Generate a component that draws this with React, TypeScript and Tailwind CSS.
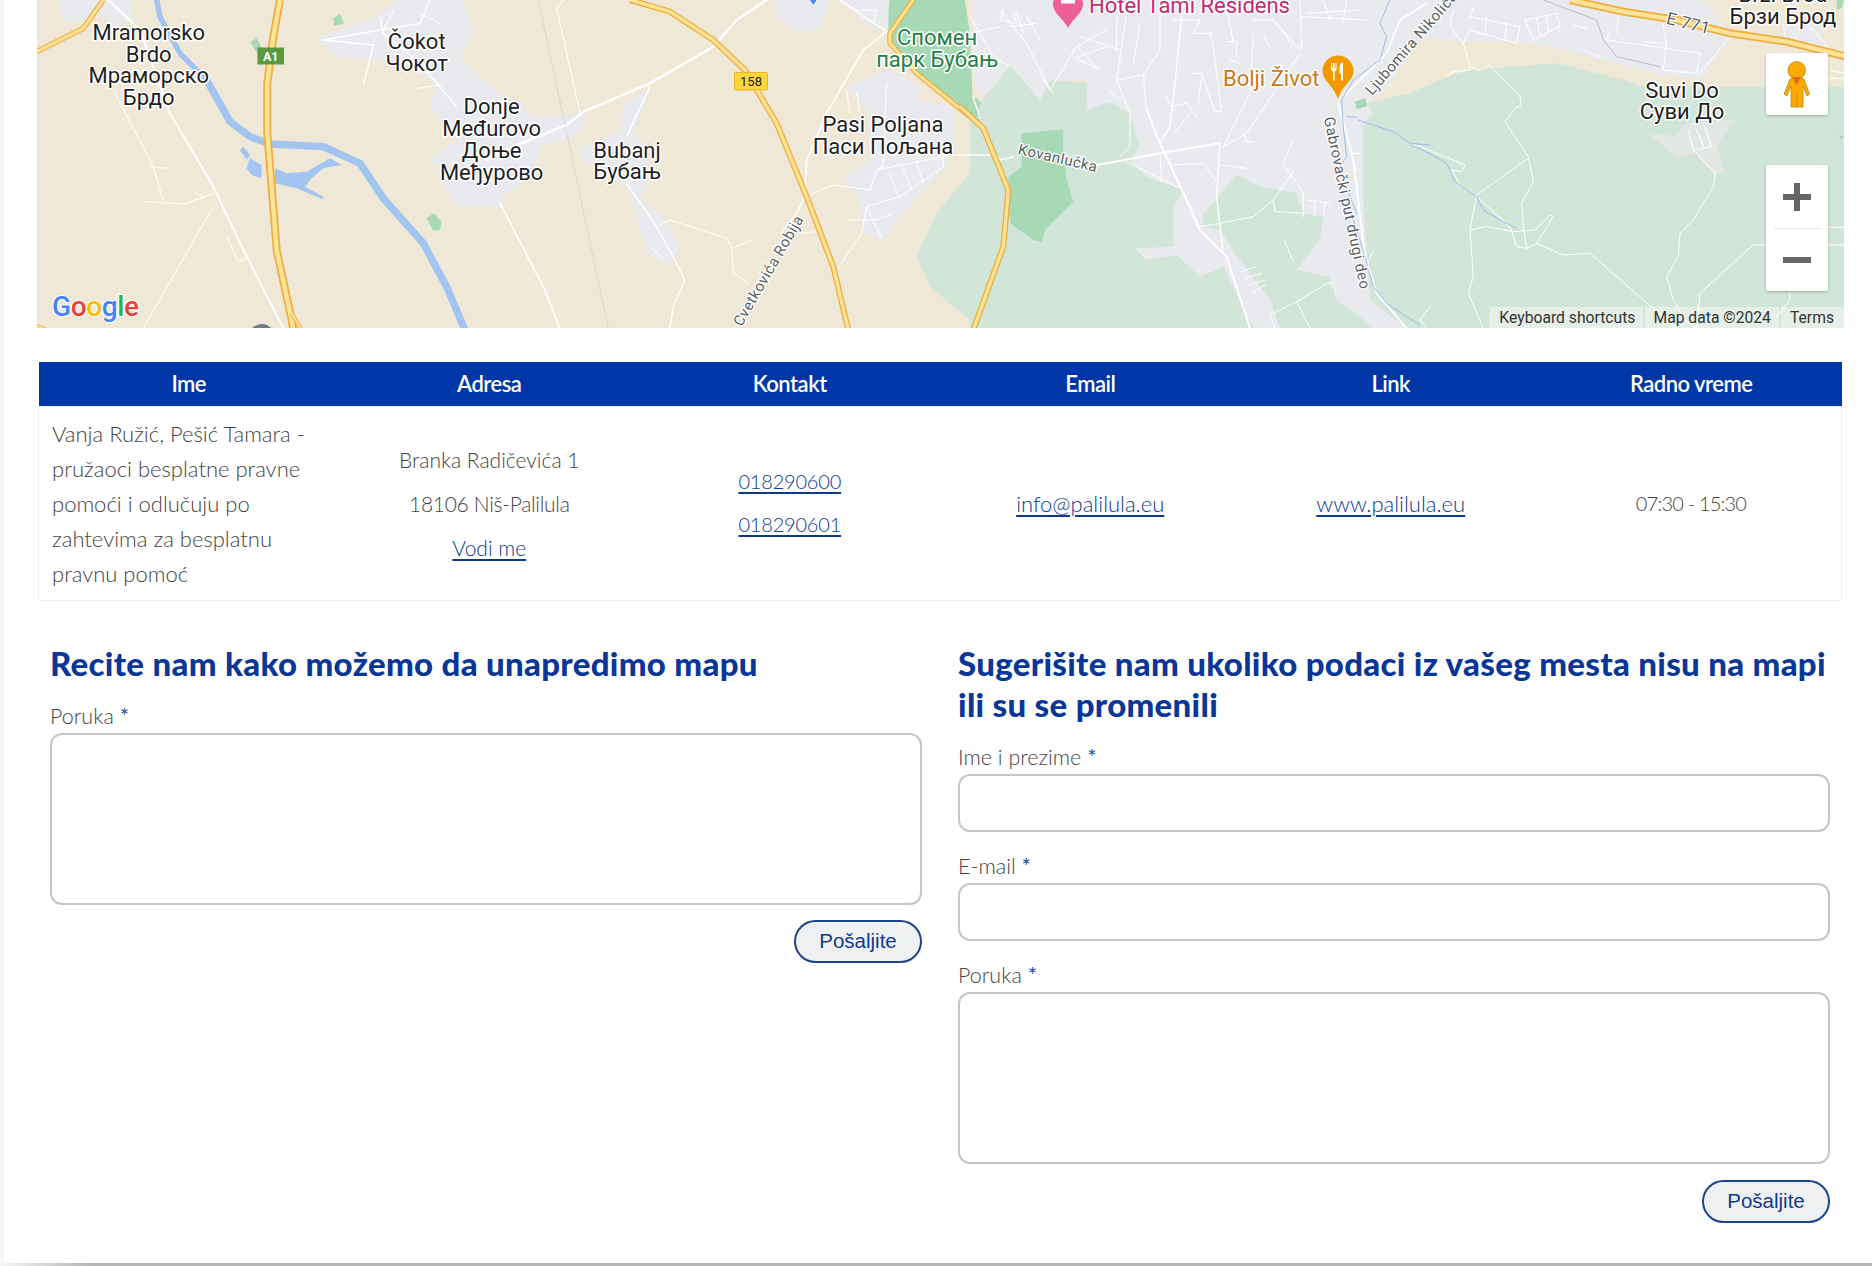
import React from 'react';

// map sketch coordinates are 3x page pixels, grouped per horizontal slice
const A = 'translate(30 0) scale(0.3333)';
const B = 'translate(500 0) scale(0.3333)';
const C = 'translate(960 0) scale(0.3333)';
const D = 'translate(1410 0) scale(0.3333)';

type Road = [number, string];

const Roads = ({ t, color = '#ffffff', data }: { t: string; color?: string; data: Road[] }) => (
  <g transform={t} fill="none" stroke={color} strokeLinejoin="round" strokeLinecap="round">
    {data.map(([w, pts]) => (
      <polyline key={pts} points={pts} strokeWidth={w} />
    ))}
  </g>
);

const Areas = ({ t, color, data }: { t: string; color: string; data: string[] }) => (
  <g transform={t} fill={color}>
    {data.map((pts) => (
      <polygon key={pts} points={pts} />
    ))}
  </g>
);

const Highway = ({ t, w, pts }: { t: string; w: number; pts: string }) => (
  <g transform={t} fill="none" strokeLinejoin="round">
    <polyline points={pts} stroke="#eeae42" strokeWidth={w} />
    <polyline points={pts} stroke="#fde396" strokeWidth={w * 0.55} />
  </g>
);

const Place = ({ x, y, lines, color = '#1f1f1f', size = 22, anchor = 'middle' }: { x: number; y: number[]; lines: string[]; color?: string; size?: number; anchor?: 'middle' | 'start' }) => (
  <text fontFamily="Roboto, sans-serif" fontSize={size} fill={color} textAnchor={anchor} stroke="#ffffff" strokeWidth={3} strokeLinejoin="round" paintOrder="stroke">
    {lines.map((line, i) => (
      <tspan key={line} x={x} y={y[i]}>
        {line}
      </tspan>
    ))}
  </text>
);

const RoadName = ({ x, y, angle, children, anchor = 'middle', size = 15 }: { x: number; y: number; angle: number; children: string; anchor?: 'middle' | 'start' | 'end'; size?: number }) => (
  <text transform={`translate(${x} ${y}) rotate(${angle})`} fontFamily="Roboto, sans-serif" fontSize={size} letterSpacing={0.4} fill="#5b5f64" textAnchor={anchor} stroke="#ffffff" strokeWidth={2.5} strokeLinejoin="round" paintOrder="stroke">
    {children}
  </text>
);

const MapDrawing = () => (
  <svg viewBox="37 0 1807 328" className="absolute inset-0 h-full w-full">
    <rect x="37" y="0" width="1807" height="328" fill="#f0e8d6" />

    {/* forest */}
    <Areas
      t={C}
      color="#d2e5d9"
      data={['-130,770 -70,640 30,520 30,340 100,260 150,195 240,300 270,240 1220,310 1350,280 1460,230 1530,210 1790,190 1990,240 2070,265 2310,260 2652,260 2652,985 30,985 30,960 -90,860']}
    />
    <Areas t={B} color="#a7d9b6" data={['1160,60 1170,0 1395,0 1410,100 1418,300 1440,350 1410,350 1250,220 1170,130']} />

    {/* built up areas */}
    <Areas
      t={C}
      color="#e8eaed"
      data={[
        '40,0 40,220 60,290 100,260 150,195 240,300 270,240 380,240 380,330 450,305 510,340 540,440 510,480 560,530 670,570 640,620 640,740 525,745 560,780 650,765 720,830 790,800 880,985 1340,985 1230,900 1210,600 1210,370 1240,340 1220,310 1240,300 1300,240 1370,130 1410,115 1500,125 1690,125 1810,150 2110,225 2220,235 2320,110 2230,0',
      ]}
    />
    <Areas
      t={C}
      color="#d2e5d9"
      data={['730,640 830,525 900,560 1010,580 1030,640 1090,650 1080,720 1010,810 1110,830 1130,900 1230,975 1240,985 960,985 930,900 840,780 780,690 730,680']}
    />
    <Areas
      t={B}
      color="#e8eaed"
      data={[
        '820,0 830,50 900,95 960,90 990,0',
        '1020,0 1165,0 1165,90 1120,90',
        '1040,260 1160,210 1270,260 1250,300 1360,320 1360,420 1340,500 1300,540 1210,640 1150,720 1090,700 1080,600 1030,530 1110,480 1100,330',
        '370,310 450,265 400,400 440,440 450,540 420,600 490,650 540,740 510,800 440,760 420,680 380,560 330,530 240,470 240,440 360,400',
        '0,300 60,310 100,350 260,340 250,385 215,410 120,440 110,490 40,570 0,590',
      ]}
    />
    <Areas
      t={A}
      color="#e8eaed"
      data={[
        '85,0 100,60 150,70 200,35 250,80 310,60 300,0',
        '860,115 1040,50 1100,0 1300,0 1330,100 1290,170 1360,240 1420,290 1420,620 1290,620 1240,560 1230,500 1190,480 1280,420 1200,320 1220,260 1130,180 1020,180 920,170',
      ]}
    />
    <Areas t={D} color="#e8eaed" data={['1120,60 1220,70 1250,140 1120,110']} />
    <Areas t={D} color="#e2e6e4" data={['720,405 760,400 790,410 830,370 970,360 920,440 945,515 915,525 860,460 800,470']} />

    {/* parks */}
    <Areas
      t={C}
      color="#a7d9b6"
      data={['185,400 310,388 310,450 320,540 340,605 255,690 245,725 220,720 150,670 145,530 185,500', '45,290 65,310 55,325 40,300', '1185,305 1215,295 1222,318 1190,328']}
    />
    <Areas t={A} color="#a7d9b6" data={['910,55 930,42 942,70 912,78', '660,125 680,115 700,150 680,158', '1190,655 1212,640 1235,665 1230,690 1210,692']} />
    <Areas t={D} color="#a7d9b6" data={['1280,0 1302,0 1295,25 1280,30', '1285,405 1302,410 1295,420']} />

    {/* water */}
    <Roads t={A} color="#a1c4f1" data={[[16, '380,0 390,50 450,160 530,240'], [22, '530,240 600,365 660,410 720,432 880,440 990,490 1060,595 1180,730 1250,860 1305,990']]} />
    <Areas
      t={A}
      color="#a1c4f1"
      data={['630,450 640,440 660,465 650,480', '660,475 695,495 695,535 665,525 650,505', '735,505 770,520 830,515 900,475 935,495 880,505 845,535 825,560 880,590 878,598 800,565 735,550']}
    />
    <Areas t={B} color="#4285f4" data={['930,0 950,0 940,14']} />

    {/* rail and thin lines */}
    <Roads t={B} color="#d6d6d6" data={[[3, '115,0 325,985']]} />
    <Roads t={D} color="#b9bcc0" data={[[3, '400,0 560,60 580,120 620,170 750,200']]} />

    {/* streets */}
    <Roads
      t={A}
      data={[
        [6, '235,0 330,90 420,340 550,560 640,750 760,985'],
        [3, '250,270 370,500 400,605'],
        [3, '360,500 412,505'],
        [3, '345,605 465,612 550,580'],
        [3, '495,580 525,590 495,600'],
        [3, '550,620 340,985'],
        [3, '590,710 625,785 650,775'],
        [4, '880,120 1050,90 1170,70 1200,0'],
        [4, '880,120 1030,135 1000,255'],
        [4, '1050,50 1060,100 1170,190 1280,320'],
        [3, '1160,265 1230,255'],
        [3, '1090,35 1060,90'],
        [3, '1170,40 1230,70'],
      ]}
    />
    <Roads
      t={B}
      data={[
        [7, '800,0 710,60 640,140 450,250 250,335 200,375 40,440 -40,480'],
        [5, '450,260 380,410'],
        [4, '380,550 470,680 530,790 555,840 520,920 510,985'],
        [3, '470,680 510,660 680,715 695,745 755,720'],
        [3, '695,745 700,820 745,850'],
        [3, '450,740 490,775'],
        [3, '170,25 240,340'],
        [3, '170,25 190,0'],
        [5, '0,610 130,860 180,985'],
        [5, '1160,95 1090,150 980,340 920,480 915,590 890,640 850,690'],
        [3, '920,590 1000,555 1110,570'],
        [3, '900,700 945,695'],
        [3, '1330,465 1410,465'],
        [3, '1110,570 1130,510 1330,470 1330,500 1200,590 1100,620 1085,700 1010,810'],
        [3, '1045,660 1130,660 1180,640'],
        [3, '1100,620 1145,715'],
        [3, '1160,250 1150,500 1130,510'],
        [3, '1170,520 1195,590'],
        [3, '1210,505 1235,570'],
        [3, '1250,490 1270,550'],
        [3, '1040,270 1050,340'],
        [3, '1070,280 1080,340'],
        [5, '1020,0 1160,95'],
        [3, '1060,30 1130,30 1120,70'],
      ]}
    />
    <Roads
      t={C}
      data={[
        [5, '0,465 100,465 125,480 160,470'],
        [6, '400,497 600,460 780,430'],
        [3, '40,290 60,355'],
        [6, '560,330 600,430 680,600 720,690 800,770 870,985'],
        [3, '470,240 510,340 510,440 480,470'],
        [3, '500,485 660,565'],
        [3, '600,460 605,545'],
        [4, '780,430 770,590 790,760'],
        [3, '790,440 860,400 920,310 1020,160'],
        [3, '640,495 730,490 770,545'],
        [3, '780,495 860,505'],
        [3, '720,680 780,670 880,650 940,600 1000,515'],
        [3, '1000,420 970,490 1030,580 1030,650'],
        [3, '940,600 945,635 1030,640'],
        [3, '1040,600 1110,610'],
        [3, '1065,610 1065,650'],
        [3, '1095,610 1090,645'],
        [6, '1135,310 1180,480 1215,770 1250,880 1340,985'],
        [5, '1150,290 1280,160 1320,60 1400,10'],
        [4, '670,0 640,300 630,380 600,430'],
        [3, '630,320 680,310 710,350'],
        [3, '640,400 690,340'],
        [3, '470,240 550,225 600,150 600,0'],
        [3, '550,225 560,330'],
        [3, '880,100 870,280 790,440'],
        [3, '700,220 725,220 715,310'],
        [3, '725,220 765,335 785,335 760,140 750,100'],
        [3, '940,60 1020,150'],
        [3, '800,125 830,125 830,170'],
        [3, '120,30 200,130 270,270 350,140 420,210'],
        [3, '350,140 440,90'],
        [3, '150,80 230,70'],
        [3, '170,40 190,100'],
        [3, '200,50 240,120'],
        [3, '360,110 480,150'],
        [3, '470,50 470,150'],
        [3, '250,240 280,280'],
        [3, '930,945 1010,905 1110,845 1130,880'],
        [3, '1010,905 1050,985'],
        [3, '930,945 945,985'],
        [3, '975,725 1000,785'],
        [3, '845,815 890,800'],
        [3, '855,835 905,820'],
        [3, '865,855 915,840'],
        [3, '875,880 915,855'],
        [3, '1020,0 1025,150'],
        [3, '1025,50 1220,60'],
        [3, '1180,460 1200,460'],
        [3, '1180,500 1200,510'],
        [3, '1240,750 1225,790'],
        [3, '30,50 60,100 100,170 150,200'],
        [3, '30,100 120,80'],
        [3, '130,30 120,60 170,70 160,40'],
        [3, '340,170 420,210'],
        [3, '355,170 440,140'],
        [3, '1040,40 1200,30'],
        [3, '1090,0 1110,60'],
        [3, '1160,0 1150,60'],
        [3, '500,40 470,240'],
        [3, '540,70 520,190'],
        [3, '640,60 720,60 700,100 760,100'],
        [3, '800,30 820,125'],
        [3, '880,60 940,60 980,110 1000,150'],
        [3, '910,110 930,140'],
        [3, '810,180 840,190'],
        [3, '620,290 640,330'],
        [3, '850,400 860,425 880,425'],
        [3, '450,275 480,295'],
      ]}
    />
    <Roads
      t={D}
      data={[
        [3, '160,130 180,90 320,130 330,80 180,50 190,20'],
        [3, '230,50 225,100'],
        [3, '290,70 285,120'],
        [3, '130,30 120,80 160,130'],
        [3, '345,60 440,40 450,80 370,120 345,60'],
        [3, '380,55 390,110'],
        [3, '410,50 415,95'],
        [3, '160,130 180,200 210,210 240,195 330,290 335,320 320,320 285,365 355,470 370,545 335,610 340,680 350,745 380,730 460,765 540,760 700,900 800,985'],
        [3, '110,230 130,215 180,210'],
        [3, '355,475 200,585 180,690 190,830 175,880 220,985'],
        [3, '180,690 230,680 310,695 375,690 420,645 430,650 380,730'],
        [3, '0,435 30,440 165,495 155,515 125,510'],
        [3, '125,510 150,555 200,590 300,680 320,740 350,745'],
        [3, '915,525 910,560 850,660 810,700 805,770 770,830 790,900 825,960 860,985'],
        [3, '860,985 870,880 1030,735 1302,735'],
        [3, '1255,682 1302,682'],
        [3, '1140,880 1140,900 1100,950'],
        [3, '835,390 850,450 915,520'],
        [3, '880,370 905,440 860,450'],
        [3, '860,390 880,440'],
        [3, '600,95 590,120 870,160 860,220 760,210 770,130 700,125'],
        [3, '625,40 620,100'],
        [3, '760,70 770,140'],
        [3, '870,220 960,110'],
        [3, '490,75 530,85'],
        [3, '520,150 570,170'],
        [3, '1120,70 1125,110'],
        [3, '1200,80 1245,130 1250,150'],
        [3, '1260,210 1300,220'],
        [3, '1260,235 1300,235'],
        [3, '60,920 30,960 50,985'],
      ]}
    />

    {/* streams */}
    <Roads t={C} color="#9dbce9" data={[[3, '1290,0 1260,70 1280,110 1260,180 1180,240 1145,300 1150,380 1160,470 1140,500 1170,590 1190,640 1180,660 1215,770 1240,860 1280,910 1340,950 1380,975'], [3, '1160,350 1190,352'], [3, '1195,360 1300,395 1350,430 1410,435']]} />
    <Roads t={D} color="#9dbce9" data={[[3, '0,435 30,445 110,490 135,545 200,590 220,630 280,665 320,685']]} />

    {/* highways */}
    <Highway t={A} w={24} pts="750,0 730,110 712,250 712,400 725,560 740,750 785,960 790,990" />
    <Highway t={A} w={12} pts="785,940 815,990" />
    <Highway t={A} w={16} pts="20,155 160,85 220,0" />
    <Highway t={A} w={12} pts="20,978 50,990" />
    <Highway t={B} w={18} pts="390,0 510,35 640,120 735,210 830,370 920,590 1000,800 1045,990" />
    <Highway t={B} w={16} pts="1240,0 1170,100 1170,130 1250,220 1410,350" />
    <Highway t={C} w={18} pts="0,320 70,385 145,570 130,740 40,990" />
    <Highway t={D} w={24} pts="480,0 640,35 800,60 960,100 1130,125 1310,170" />

    {/* shields */}
    <rect x="257.5" y="47.5" width="26.5" height="17" fill="#5b9a3f" />
    <text x="270.7" y="60.5" fontFamily="Roboto, sans-serif" fontWeight={700} fontSize={12.5} fill="#ffffff" textAnchor="middle">A1</text>
    <rect x="734.5" y="72.5" width="33" height="17.5" rx="1" fill="#fdd63a" stroke="#e8b52c" />
    <text x="751" y="86" fontFamily="Roboto, sans-serif" fontSize={13} fill="#222222" textAnchor="middle">158</text>

    {/* pins */}
    <path d="M1053,4 a15,15 0 1 1 30,0 c0,9 -10,14 -15,24 c-5,-10 -15,-15 -15,-24z" fill="#ee5f94" />
    <rect x="1061" y="0" width="14" height="3.5" fill="#ffffff" />
    <path d="M1322.5,71 a15.5,15.5 0 1 1 31,0 c0,10 -11,14 -15.500,28 c-4.500,-14 -15.500,-18 -15.500,-28z" fill="#f29900" />
    <path d="M1331,63 v6 a2.500,2.500 0 0 0 2,2.500 v9 h1.600 v-9 a2.500,2.500 0 0 0 2,-2.500 v-6 h-1 v5 h-1 v-5 h-1.600 v5 h-1 v-5z M1341,80.500 v-7 h-1.500 v-6 c0,-3 1.500,-5 3.500,-5 v18z" fill="#ffffff" />

    {/* place names */}
    <Place x={148.7} y={[40, 61.7, 83.3, 105.3]} lines={['Mramorsko', 'Brdo', 'Мраморско', 'Брдо']} />
    <Place x={416.7} y={[49, 70.7]} lines={['Čokot', 'Чокот']} />
    <Place x={491.6} y={[114, 136, 157.7, 180]} lines={['Donje', 'Međurovo', 'Доње', 'Међурово']} />
    <Place x={627} y={[157.7, 179.3]} lines={['Bubanj', 'Бубањ']} />
    <Place x={883} y={[131.7, 154]} lines={['Pasi Poljana', 'Паси Пољана']} />
    <Place x={937} y={[45, 66.7]} lines={['Спомен', 'парк Бубањ']} color="#1f8049" />
    <Place x={1089} y={[13.3]} lines={['Hotel Tami Residens']} color="#c5296f" anchor="start" />
    <Place x={1223} y={[85.7]} lines={['Bolji Život']} color="#c9781a" anchor="start" />
    <Place x={1682} y={[97.7, 119.3]} lines={['Suvi Do', 'Суви До']} />
    <Place x={1783} y={[2, 24]} lines={['Brzi Brod', 'Брзи Брод']} />

    <RoadName x={1056.7} y={163} angle={13}>Kovanlučka</RoadName>
    <RoadName x={1342} y={204} angle={78}>Gabrovački put drugi deo</RoadName>
    <RoadName x={1372} y={96} angle={-49} anchor="start">Ljubomira Nikolića</RoadName>
    <RoadName x={804} y={219} angle={-60} anchor="end">e Cvetkovića Robija</RoadName>
    <RoadName x={1687} y={29} angle={14} size={17}>E 771</RoadName>

    <circle cx="261.7" cy="337" r="13" fill="#6d7f8b" />

    {/* google wordmark */}
    <text x="52" y="316" fontFamily="Roboto, sans-serif" fontWeight={500} fontSize={28} stroke="#ffffff" strokeWidth={2} paintOrder="stroke" letterSpacing={-0.4}>
      <tspan fill="#4285f4">G</tspan>
      <tspan fill="#ea4335">o</tspan>
      <tspan fill="#fbbc05">o</tspan>
      <tspan fill="#4285f4">g</tspan>
      <tspan fill="#34a853">l</tspan>
      <tspan fill="#ea4335">e</tspan>
    </text>
  </svg>
);

const MapControls = () => (
  <>
    <div className="absolute left-[1729px] top-[53px] flex h-[62px] w-[62px] items-center justify-center rounded-[2px] bg-white shadow-[0_1px_3px_rgba(0,0,0,0.25)]">
      <svg viewBox="0 0 62 62" className="h-[62px] w-[62px]">
        <circle cx="30.700" cy="17.300" r="8.800" fill="#f9ab00" stroke="#b97f12" strokeWidth="0.7" />
        <path d="M24,26 Q31,23 38,26 L43.500,41 L41,43 L37,33 L37,54 L25,54 L25,33 L21,43 L18,41Z" fill="#f9ab00" stroke="#b97f12" strokeWidth="0.7" />
        <path d="M26,24 L35,24 L30.700,32Z" fill="#e5662a" />
        <path d="M31,40 V54" stroke="#b97f12" strokeWidth="0.7" />
      </svg>
    </div>
    <div className="absolute left-[1729px] top-[165px] flex h-[126px] w-[62px] flex-col items-center rounded-[2px] bg-white shadow-[0_1px_3px_rgba(0,0,0,0.25)]">
      <div className="flex h-[63px] w-full items-center justify-center">
        <div className="relative h-[28px] w-[28px]">
          <div className="absolute left-0 top-[11px] h-[6px] w-[28px] bg-[#666666]" />
          <div className="absolute left-[11px] top-0 h-[28px] w-[6px] bg-[#666666]" />
        </div>
      </div>
      <div className="h-px w-[47px] bg-[#e6e6e6]" />
      <div className="flex h-[62px] w-full items-center justify-center">
        <div className="h-[6px] w-[28px] bg-[#666666]" />
      </div>
    </div>
    <div className="absolute bottom-0 right-0 flex h-[21px] gap-[2px] font-['Roboto',sans-serif] text-[15.7px] leading-[21px] text-[#333333]">
      <span className="whitespace-nowrap bg-white/40 pl-[9px] pr-[8px]">Keyboard shortcuts</span>
      <span className="whitespace-nowrap bg-white/40 px-[8px]">Map data ©2024</span>
      <span className="whitespace-nowrap bg-white/40 pl-[9px] pr-[10px]">Terms</span>
    </div>
  </>
);

const Label = ({ children }: { children: string }) => (
  <label className="block h-[33px] text-[21.5px] font-light leading-[32px] text-[#444444]">
    {children} <span className="text-[22px] font-normal text-[#1f4a94]">*</span>
  </label>
);

const TextBox = () => <input type="text" className="block h-[58px] w-full rounded-[12px] border-2 border-[#c6c6c6] bg-white" />;
const Message = () => <textarea className="block h-[172px] w-full resize-none rounded-[12px] border-2 border-[#c6c6c6] bg-white" />;

const Send = ({ className }: { className: string }) => (
  <div className={`flex justify-end ${className}`}>
    <button className="h-[43px] w-[128px] rounded-full border-2 border-[#1c4688] bg-[#eff0f2] font-['Liberation_Sans',Arial,sans-serif] text-[20.5px] text-[#0f3a8c]">
      Pošaljite
    </button>
  </div>
);

const Heading = ({ children }: { children: string }) => (
  <h3 className="mb-[16px] text-[33px] font-black leading-[41px] tracking-[0.3px] text-[#0a3797]">{children}</h3>
);

const columns = ['Ime', 'Adresa', 'Kontakt', 'Email', 'Link', 'Radno vreme'];
const linkClass = 'text-[#0d3a8c] underline decoration-[1.5px] underline-offset-[3px]';

export default function App() {
  return (
    <div className="relative h-[1266px] w-full overflow-hidden bg-white pl-[4px] font-['Lato',sans-serif]">
      <div className="absolute inset-y-0 left-0 w-[4px] bg-[#f6f6f6]" />

      <div className="relative ml-[33px] h-[328px] w-[1807px] overflow-hidden">
        <MapDrawing />
        <MapControls />
      </div>

      <table className="ml-[34px] mt-[34px] w-[1804px] table-fixed border-collapse text-[21px] font-light text-[#444444]">
        <thead>
          <tr className="h-[44px] bg-[#0037a6]">
            {columns.map((c) => (
              <th key={c} className="text-center text-[22px] font-semibold tracking-[-0.5px] text-white">
                {c}
              </th>
            ))}
          </tr>
        </thead>
        <tbody>
          <tr className="h-[194px] border border-[#f0f0f0] leading-[35px]">
            <td className="py-[9px] pl-[13px] pr-[30px] text-[22px]">Vanja Ružić, Pešić Tamara - pružaoci besplatne pravne pomoći i odlučuju po zahtevima za besplatnu pravnu pomoć</td>
            <td className="text-center">
              <p className="mb-[9px]">Branka Radičevića 1</p>
              <p className="mb-[9px] tracking-[-0.3px]">18106 Niš-Palilula</p>
              <a href="#" className={linkClass}>Vodi me</a>
            </td>
            <td className="text-center text-[20px] tracking-[-0.2px]">
              <p className="mb-[8px]"><a href="#" className={linkClass}>018290600</a></p>
              <p><a href="#" className={linkClass}>018290601</a></p>
            </td>
            <td className="text-center text-[22px]"><a href="#" className={linkClass}>info@palilula.eu</a></td>
            <td className="text-center text-[22px]"><a href="#" className={linkClass}>www.palilula.eu</a></td>
            <td className="text-center text-[20px] tracking-[-0.8px]">07:30 - 15:30</td>
          </tr>
        </tbody>
      </table>

      <div className="ml-[46px] mt-[42px] grid w-[1780px] grid-cols-2 gap-x-[36px]">
        <form>
          <Heading>Recite nam kako možemo da unapredimo mapu</Heading>
          <Label>Poruka</Label>
          <Message />
          <Send className="mt-[15px]" />
        </form>
        <form>
          <Heading>Sugerišite nam ukoliko podaci iz vašeg mesta nisu na mapi ili su se promenili</Heading>
          <Label>Ime i prezime</Label>
          <TextBox />
          <div className="mt-[18px]">
            <Label>E-mail</Label>
            <TextBox />
          </div>
          <div className="mt-[18px]">
            <Label>Poruka</Label>
            <Message />
          </div>
          <Send className="mt-[16px]" />
        </form>
      </div>

      <div className="absolute bottom-0 left-0 right-0 h-[3px] bg-gradient-to-r from-[#f6f6f6] via-[#b5b5b5] via-[5%] to-[#b5b5b5]" />
    </div>
  );
}
